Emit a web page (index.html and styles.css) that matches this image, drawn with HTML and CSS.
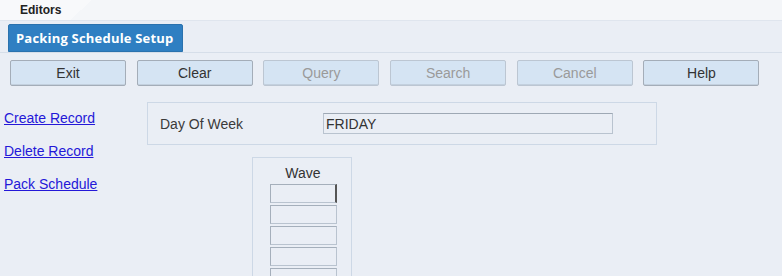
FILE: index.html
```html
<!DOCTYPE html>
<html>
<head>
  <title>Packing Schedule Setup</title>
  <link rel="stylesheet" href="styles.css">
</head>
<body>
  <div class="topbar">
    <div class="editors-tab">Editors</div>
  </div>
  <div class="title-row">
    <div class="title-tab">Packing Schedule Setup</div>
  </div>
  <div class="toolbar">
    <button class="button">Exit</button>
    <button class="button">Clear</button>
    <button class="button disabled">Query</button>
    <button class="button disabled">Search</button>
    <button class="button disabled">Cancel</button>
    <button class="button">Help</button>
  </div>
  <div class="main">
    <div class="links">
      <a href="#">Create Record</a>
      <a href="#">Delete Record</a>
      <a href="#">Pack Schedule</a>
    </div>
    <div class="form">
      <div class="panel day-panel">
        <span class="field-label">Day Of Week</span>
        <input type="text" class="field-input" value="FRIDAY">
      </div>
      <div class="panel wave-panel">
        <div class="wave-title">Wave</div>
        <input type="text" class="wave-input first">
        <input type="text" class="wave-input">
        <input type="text" class="wave-input">
        <input type="text" class="wave-input">
        <input type="text" class="wave-input">
      </div>
    </div>
  </div>
</body>
</html>
```

FILE: styles.css
```css
* {
  margin: 0;
  padding: 0;
  box-sizing: border-box;
}

html, body {
  width: 100%;
  height: 100%;
  overflow: hidden;
}

body {
  background: #eaeef5;
  font-family: 'Liberation Sans', Arial, sans-serif;
  color: #333;
}

.topbar {
  height: 21px;
  background: #f4f6f9;
  border-bottom: 1px solid #dfe5ee;
  display: flex;
  align-items: flex-end;
}

.editors-tab {
  position: relative;
  height: 20px;
  width: 70px;
  padding: 3px 0 0 20px;
  background: #f8f9fb;
  font-size: 12px;
  font-weight: bold;
  color: #222;
}

.editors-tab::after {
  content: '';
  position: absolute;
  top: 0;
  right: -22px;
  width: 22px;
  height: 20px;
  background: linear-gradient(to bottom right, #f8f9fb 50%, transparent 50%);
}

.title-row {
  padding: 3px 0 0 8px;
  border-bottom: 1px solid #d6dee9;
  display: flex;
}

.title-tab {
  background: #2f7fc2;
  color: #fff;
  font-family: 'Open Sans', 'Liberation Sans', sans-serif;
  font-weight: bold;
  font-size: 13px;
  height: 28px;
  line-height: 27px;
  padding: 0 8px 0 7px;
  border: 1px solid #2a72ae;
  border-radius: 2px 2px 0 0;
  letter-spacing: 0.2px;
}

.toolbar {
  display: flex;
  gap: 10.7px;
  padding: 7px 0 0 10px;
}

.button {
  width: 116px;
  height: 26px;
  background: #d5e4f3;
  border: 1px solid #a4adb8;
  border-radius: 2px;
  font-family: 'Liberation Sans', Arial, sans-serif;
  font-size: 14px;
  color: #333;
  box-shadow: inset 0 -1px 0 #c3d0de;
}

.button.disabled {
  color: #9a9a9a;
  border-color: #bcc6d2;
}

.main {
  display: flex;
  padding-top: 16px;
}

.links {
  width: 147px;
  display: flex;
  flex-direction: column;
  gap: 17px;
  padding: 8px 0 0 4px;
}

.links a {
  color: #2418d8;
  font-size: 14px;
  line-height: 16px;
}

.form {
  display: flex;
  flex-direction: column;
}

.panel {
  border: 1px solid #cdd8e6;
}

.day-panel {
  width: 510px;
  height: 43px;
  display: flex;
  align-items: center;
  padding-left: 12px;
}

.field-label {
  width: 163px;
  font-size: 14px;
  color: #3a3a3a;
}

.field-input {
  width: 290px;
  height: 21px;
  border: 1px solid #b9c3cf;
  border-top-color: #9ea8b4;
  background: #eaeef5;
  font-family: 'Liberation Sans', Arial, sans-serif;
  font-size: 14px;
  color: #333;
  padding: 0 2px;
}

.wave-panel {
  margin: 12px 0 0 105px;
  width: 100px;
  height: 130px;
  display: flex;
  flex-direction: column;
  align-items: center;
  gap: 2px;
  border-bottom: none;
}

.wave-title {
  font-size: 14px;
  padding: 7px 0 1px 2px;
}

.wave-input {
  width: 67px;
  height: 20px;
  margin-left: 2px;
  border: 1px solid #b9c3cf;
  border-top-color: #a5afbb;
  border-left-color: #a5afbb;
  background: #eaeef5;
}

.wave-input.first {
  border-right: 2px solid #555;
}
```
